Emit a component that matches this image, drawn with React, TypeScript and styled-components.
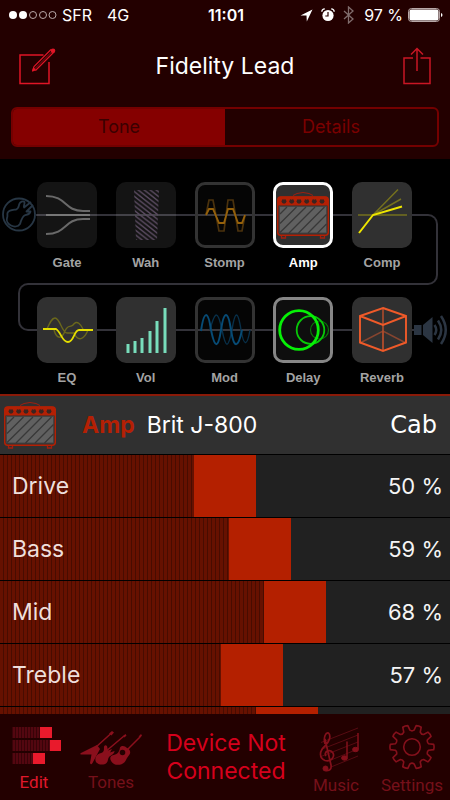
import React, { useState } from 'react';
import styled, { createGlobalStyle, css } from 'styled-components';

const GlobalStyle = createGlobalStyle`
  *, *::before, *::after { box-sizing: border-box; }
  body { margin: 0; background: #000; }
  button { border: 0; margin: 0; padding: 0; background: none; font: inherit; color: inherit; cursor: pointer; }
  svg { display: block; flex: none; }
`;

const Screen = styled.div`
  height: 100vh;
  display: flex;
  flex-direction: column;
  overflow: hidden;
  background: #000;
  color: #fff;
  font-family: Inter, 'Liberation Sans', sans-serif;
`;

const Header = styled.header`
  flex: none;
  padding-bottom: 12px;
  background: #230000;
`;

const StatusBar = styled.div`
  display: grid;
  grid-template-columns: 1fr auto 1fr;
  align-items: center;
  height: 30px;
  padding: 0 7px 0 9px;
  font-size: 16px;
  line-height: 20px;
  white-space: nowrap;
`;

const StatusGroup = styled.div<{ $end?: boolean }>`
  display: flex;
  align-items: center;
  gap: 5px;
  justify-content: ${p => (p.$end ? 'flex-end' : 'flex-start')};
`;

const StatusIcons = styled.span`
  display: flex;
  align-items: center;
  gap: 8px;
  margin-right: 5px;
`;

const Network = styled.span`
  margin-left: 10px;
`;

const Clock = styled.time`
  font-weight: 600;
`;

const TitleBar = styled.div`
  display: grid;
  grid-template-columns: 38px 1fr 38px;
  align-items: center;
  height: 77px;
  padding: 0 18px 5px;
`;

const ShareButton = styled.button`
  justify-self: end;
`;

const Title = styled.h1`
  margin: 0;
  text-align: center;
  font-size: 23px;
  line-height: 30px;
  font-weight: 400;
`;

const Segmented = styled.div`
  display: grid;
  grid-template-columns: 1fr 1fr;
  height: 40px;
  margin: 0 11px;
  border: 2px solid #740000;
  border-radius: 6px;
  overflow: hidden;
`;

const Segment = styled.button<{ $active?: boolean }>`
  && {
    font-size: 18px;
    line-height: 20px;
    ${p => (p.$active
      ? css`background: #850000; color: #3a0000;`
      : css`color: #7a0000;`)}
  }
`;

const Chain = styled.section`
  position: relative;
  z-index: 0;
  flex: none;
  display: flex;
  flex-direction: column;
  gap: 23px;
  height: 235px;
  padding-top: 23px;
`;

const WireRight = styled.div`
  position: absolute;
  z-index: -1;
  left: 36px;
  right: 12px;
  top: 55px;
  height: 71px;
  border: 2px solid #333239;
  border-left: 0;
  border-radius: 0 10px 10px 0;
`;

const WireLeft = styled.div`
  position: absolute;
  z-index: -1;
  left: 18px;
  right: 30px;
  top: 124px;
  height: 48px;
  border: 2px solid #333239;
  border-right: 0;
  border-radius: 10px 0 0 10px;
`;

const ChainRow = styled.div`
  display: grid;
  grid-template-columns: 37px 1fr 38px;
`;

const ChainEnd = styled.div<{ $out?: boolean }>`
  height: 66px;
  display: flex;
  align-items: center;
  justify-content: ${p => (p.$out ? 'flex-end' : 'center')};
`;

const Blocks = styled.div`
  display: flex;
  justify-content: space-between;
`;

const Block = styled.button`
  width: 60px;
  display: flex;
  flex-direction: column;
  align-items: center;
  gap: 4px;
`;

type TileKind = 'on' | 'off' | 'dark' | 'selected' | 'lit';

const tileLook: Record<TileKind, ReturnType<typeof css>> = {
  on: css`background: #303030;`,
  off: css`background: rgba(255, 255, 255, 0.08);`,
  dark: css`background: rgba(255, 255, 255, 0.02); border: 3px solid #333;`,
  selected: css`background: #303030; border: 3px solid #fff;`,
  lit: css`background: #0e0e0e; border: 3px solid #868686;`,
};

const Tile = styled.span<{ $kind: TileKind }>`
  width: 60px;
  height: 66px;
  display: flex;
  align-items: center;
  justify-content: center;
  border-radius: 10px;
  ${p => tileLook[p.$kind]}
  svg { margin: -3px; }
`;

const BlockLabel = styled.span<{ $kind: TileKind }>`
  font: bold 13px/22px 'Liberation Sans', Arial, sans-serif;
  color: ${p => (p.$kind === 'selected' ? '#fff' : '#a3a3a3')};
  white-space: nowrap;
`;

const ModelBar = styled.section`
  flex: none;
  display: flex;
  align-items: center;
  height: 60px;
  margin-bottom: 1px;
  padding: 0 13px 0 4px;
  border-top: 2px solid #8a1a08;
  background: #303030;
  font-size: 23px;
  line-height: 30px;
`;

const ModelButton = styled.button`
  display: flex;
  align-items: center;
  flex: 1;
`;

const ModelType = styled.strong`
  margin: 0 12px 0 26px;
  font-weight: 700;
  color: #b42004;
`;

const CabButton = styled.button`
  && { font-family: 'DejaVu Sans', Verdana, sans-serif; font-size: 24px; }
`;

const Params = styled.main`
  flex: 1;
  min-height: 0;
  overflow: hidden;
`;

const ParamRow = styled.label`
  display: grid;
  grid-template-columns: 1fr auto;
  align-items: center;
  height: 63px;
  border-bottom: 1px solid #000;
  font-size: 23px;
  line-height: 30px;
`;

const ParamText = styled.span<{ $value?: boolean }>`
  grid-row: 1;
  grid-column: ${p => (p.$value ? 2 : 1)};
  z-index: 1;
  padding: ${p => (p.$value ? '0 7px 0 0' : '0 0 0 12px')};
  font-size: ${p => (p.$value ? 22 : 23)}px;
  color: ${p => (p.$value ? '#f4f4f4' : '#eedfdc')};
  pointer-events: none;
`;

const knob = css`
  width: 62px;
  height: 62px;
  border: 0;
  border-radius: 0;
  background: #b42000;
`;

const Slider = styled.input`
  grid-row: 1;
  grid-column: 1 / 3;
  appearance: none;
  width: 100%;
  height: 62px;
  margin: 0;
  cursor: pointer;
  background:
    linear-gradient(to right, transparent calc((100% - 62px) * var(--level)), #212121 0),
    repeating-linear-gradient(to right, #661100 0 3px, #480c00 3px 4px);
  &::-webkit-slider-thumb { appearance: none; ${knob} }
  &::-moz-range-thumb { ${knob} }
`;

const TabBar = styled.nav`
  flex: none;
  display: grid;
  grid-template-columns: 68px 86px 1fr 76px 76px;
  height: 86px;
  background: #230000;
`;

const Tab = styled.button<{ $active?: boolean; $low?: boolean }>`
  display: flex;
  flex-direction: column;
  align-items: center;
  justify-content: flex-end;
  && {
    padding-bottom: ${p => (p.$low ? 6 : 9)}px;
    font: 17px/18px Roboto, 'Liberation Sans', sans-serif;
    color: ${p => (p.$active ? '#e0182b' : '#75101a')};
  }
`;

const DeviceStatus = styled.button`
  && {
    font-size: 23px;
    line-height: 28px;
    color: #d6001c;
    text-align: center;
  }
`;

const ComposeIcon = () => (
  <svg width="38" height="38" viewBox="0 0 38 38" fill="none" stroke="#e01526" strokeWidth="1.5">
    <path d="M25.500 8H2V36.500H31V15" />
    <path d="M14.500 24L16 19.500 33 2.500M17.500 23.500L36 5" strokeWidth="1.100" />
    <path d="M16.500 22L34 4.500" strokeWidth=".600" />
    <path d="M14 24.800l1.300-4.800 3 3.200z" fill="#e01526" stroke="none" />
    <circle cx="35" cy="3.700" r="2.300" fill="#e01526" stroke="none" />
  </svg>
);

const ShareIcon = () => (
  <svg width="30" height="40" viewBox="0 0 30 40" fill="none" stroke="#c91624" strokeWidth="1.500">
    <path d="M11 12H2V37.500H28V12H18.500" />
    <path d="M15 25V3M9 8.500l6-6 6 6" />
  </svg>
);

const SignalIcon = () => (
  <svg width="48" height="10" viewBox="0 0 48 10">
    <circle cx="4" cy="5" r="4" fill="#fff" />
    <circle cx="14" cy="5" r="4" fill="#fff" />
    {[24, 34, 43.5].map(x => <circle key={x} cx={x} cy="5" r="3.500" fill="none" stroke="#b8a8a8" />)}
  </svg>
);

const LocationIcon = () => (
  <svg width="13" height="13" viewBox="0 0 13 13"><path d="M.500 6.500L12.500.500 6.800 12.500 6.500 6.500z" fill="#fff" /></svg>
);

const AlarmIcon = () => (
  <svg width="14" height="14" viewBox="0 0 14 14">
    <circle cx="7" cy="7.500" r="5.600" fill="#fff" />
    <path d="M.800 3.800A3 3 0 013.800.900M10.200.900a3 3 0 013 2.900" stroke="#fff" strokeWidth="1.300" fill="none" />
    <path d="M7 4v4H4.300" stroke="#230000" strokeWidth="1.200" fill="none" />
  </svg>
);

const BluetoothIcon = () => (
  <svg width="11" height="18" viewBox="0 0 11 18"><path d="M1 5l9 8-4.500 4V1L10 5l-9 8" fill="none" stroke="#806c6c" strokeWidth="1.300" /></svg>
);

const BatteryIcon = () => (
  <svg width="35" height="14" viewBox="0 0 35 14">
    <rect x=".500" y=".500" width="31" height="13" rx="3" fill="none" stroke="#b8a8a8" />
    <rect x="1.500" y="1.500" width="29" height="11" rx="2" fill="#fff" />
    <path d="M33 5v4q1.500-.500 1.500-2T33 5z" fill="#fff" />
  </svg>
);

const InputIcon = () => (
  <svg width="35" height="36" viewBox="0 0 35 36" fill="none" stroke="#273644" strokeWidth="1.800" strokeLinejoin="round">
    <circle cx="18" cy="17.500" r="16" />
    <path d="M30 5L23 10.500C22 10 24 7 23.500 5C22 3.500 19 5 18.300 7C17.500 10 17.500 12 15 12.500C11 13 7.500 13 6.500 16C6 18 7 19 6 21C5 24 7 27 10 28.500C13 30 17 30 19 27C20 24 21 20 23.500 18.500C26 17.500 29 17.500 29.500 14.500L25.500 14.500 32 8" />
  </svg>
);

const OutputIcon = () => (
  <svg width="36" height="32" viewBox="0 0 36 32" fill="none" stroke="#2b3542" strokeWidth="2.500">
    <path d="M0 11h7.500v10H0zM9 11L18.500 3v26L9 21z" fill="#2b3542" stroke="none" />
    <path d="M20.500 11q3.500 5 0 10M24 6.500q6.500 9.500 0 19M27 2q9.500 14 0 28" />
  </svg>
);

const AmpIcon = () => (
  <svg width="52" height="48" viewBox="0 0 52 48">
    <path d="M16 4.500L20 2.500Q26 .500 32 2.500L36 4.500" fill="none" stroke="#9c2010" strokeWidth="1" />
    <rect x=".700" y="6" width="50.600" height="38.300" rx="3" fill="#303030" stroke="#b42004" strokeWidth="1.500" />
    <path d="M1 14.500V8q0-2.500 2.500-2.500h45Q51 5.500 51 8v6.500z" fill="#b42004" />
    {[7, 14.7, 22, 29.7, 37.3, 45].map(x => (
      <g key={x}>
        <circle cx={x} cy="10.300" r="2.400" fill="#3a2420" />
        <path d={`M${x} 7v2`} stroke="#b42004" strokeWidth=".800" />
      </g>
    ))}
    <rect x="2.500" y="15.500" width="47" height="26.500" fill="#606060" stroke="#444" />
    <path d="M3 23l7-7M3 32.500L19.500 16M3 41.500L29 16M12 42l26-26M21.500 42l26-26M31 42l18.500-18.500M40.500 42l9-9" stroke="#383838" strokeWidth="1.300" />
    <path d="M4.500 45v2h4v-2M43.500 45v2h4v-2" fill="none" stroke="#a02010" strokeWidth="1.300" />
  </svg>
);

const Pic = ({ children }: { children: React.ReactNode }) => (
  <svg width="60" height="66" viewBox="0 0 60 66" fill="none">{children}</svg>
);

const GateIcon = () => (
  <Pic>
    <g stroke="#696969" strokeWidth="2">
      <path d="M9 14C30 14 27 29 46 29H53M9 52C30 52 27 37 46 37H53" />
      <path d="M9 33H53" stroke="#777" />
    </g>
  </Pic>
);

const WahIcon = () => (
  <Pic>
    <defs>
      <pattern id="wah-lines" width="6" height="4.700" patternUnits="userSpaceOnUse">
        <path d="M-1 -.800L7 5.500M-1 3.900L7 10.200M-1 -5.500L7 .800" stroke="#594a5f" strokeWidth="1.400" />
      </pattern>
    </defs>
    <path d="M18 8H43L41 58H20z" fill="url(#wah-lines)" />
  </Pic>
);

const StompIcon = () => (
  <Pic>
    <path d="M11 33L14 18H18L24 49H29L33 18H38L43 49H47L50 33" stroke="#4b320d" strokeWidth="1.700" />
    <path d="M11 33L14 27H18L24 41H29L33 27H38L43 41H47L50 33" stroke="#95610b" strokeWidth="1.800" />
  </Pic>
);

const CompIcon = () => (
  <Pic>
    <path d="M6 33H55M21 33L46 7.500M21 33L49 17" stroke="#74701e" strokeWidth="1.500" />
    <path d="M7 51L21 33 50 24.500" stroke="#eee600" strokeWidth="2" />
  </Pic>
);

const EqIcon = () => (
  <Pic>
    <path d="M6 32H10C13 25 15 21 18 21C23 21 25 36 30 36H37C41 45 47 43 51 33M17 33C20 43 25 42 28 34C31 27 33 31 36 28C40 22 44 28 46 32" stroke="#6b681b" strokeWidth="1.400" />
    <path d="M6 32H19C24 35 25 45 31 45C37 45 37 33 42 33H56" stroke="#e5df00" strokeWidth="1.800" />
  </Pic>
);

const VolIcon = () => (
  <Pic>
    <path d="M12 56v-9M19 56v-12M26 56v-15M34 56V34M41 56V24M49 56V11" stroke="#78ddbb" strokeWidth="3" />
  </Pic>
);

const ModIcon = () => (
  <Pic>
    <path d="M15 33C20 13 23 13 27 33C31 52 33 52 37 33C40 13 43 13 46 33C49 50 52 50 55 33" stroke="#08304a" strokeWidth="1.400" />
    <path d="M6 34C9 13 13 13 16 33C20 52 23 52 26 33C29 13 33 13 36 33C39 52 43 52 47 33" stroke="#074b75" strokeWidth="2" />
  </Pic>
);

const DelayIcon = () => (
  <Pic>
    <circle cx="46.500" cy="33" r="9" stroke="#087a08" strokeWidth="1.200" />
    <circle cx="37.500" cy="33" r="13.800" stroke="#08c808" strokeWidth="1.800" />
    <circle cx="26" cy="33" r="19.300" stroke="#06f006" strokeWidth="2.800" />
  </Pic>
);

const ReverbIcon = () => (
  <Pic>
    <path d="M8 46L31 34 54 46M31 34V54" stroke="#87452f" strokeWidth="1.500" />
    <path d="M31 11V54" stroke="#b64d2b" strokeWidth="1.500" />
    <path d="M31 11L54 19V45.500L31 54 8 45.500V19zM8 19L31 28 54 19" stroke="#ef5a29" strokeWidth="1.900" />
  </Pic>
);

const EditIcon = () => (
  <svg width="54" height="52" viewBox="0 0 54 52">
    <defs>
      <pattern id="edit-lines" width="3" height="4" patternUnits="userSpaceOnUse">
        <path d="M0 0h2v4H0z" fill="#530710" /><path d="M2 0h1v4H2z" fill="#380308" />
      </pattern>
    </defs>
    <path d="M5 6h28v11H5zM5 19h39v11H5zM5 32h22v11H5z" fill="url(#edit-lines)" />
    <path d="M33 6h12v11H33zM43 19h11v11H43zM26 32h12v11H26z" fill="#e91a2c" />
  </svg>
);

const GuitarsIcon = () => (
  <svg width="62" height="52" viewBox="2 0 62 52" fill="#8a0f1c">
    <path d="M18 26L33 12.500M27 31L46 15M48 30L62 16" stroke="#8a0f1c" strokeWidth="1.500" />
    <path d="M31 12.500L34 10 36 11.500 33.500 14.500zM45 15L47.500 13 48.500 14.500 46.500 16.500zM60.500 15.500L63 13 64 14.500 62.500 16.500z" />
    <path d="M19 24L3 32Q1.500 33 3 33.500L13.500 33.500 12 42Q13 44.500 14.500 42L22 28z" />
    <path d="M29 25C27 23 25.500 25 26 28C26 31 24 32 21.500 32.500C17.500 34 16.500 38 18 41C20 44 26 44.500 28.500 42C30.500 40 29.500 38 31 36C33 34 36.500 33 36.500 30L32 31.500 34 28 30 29.500z" />
    <path d="M42 26.500C44 24 47 25 49 27C52 28.500 53 31 51.500 33.500C50 35.500 49 37 48 39C46 43.500 40 45 36 43C32 40.500 31 36 34 34.500C39 33.500 41 32 42 26.500zM44.500 28.700a2.800 2.800 0 100 5.600 2.800 2.800 0 000-5.600z" fillRule="evenodd" />
  </svg>
);

const MusicIcon = () => (
  <svg width="46" height="52" viewBox="0 0 46 52" fill="none" stroke="#84101b">
    <path d="M8 18.500L45 4M8 25.500L45 11M8 32.500L45 18M18 36L45 25M18 43L45 32" stroke="#570b12" />
    <path d="M12 20C10 13 13 8 15.500 9C18.500 12 16 18 12 22C6 27 6 34 12 36.500C18 38 22 33 20 29C17 24 10 28 13 32M12 15L18 41Q19 47 13 46.500" strokeWidth="1.700" />
    <path d="M34 17.500V33M45 9V25" strokeWidth="1.500" />
    <ellipse cx="31.500" cy="34" rx="2.900" ry="2.200" fill="#84101b" />
    <ellipse cx="42.500" cy="25.500" rx="2.900" ry="2.200" fill="#84101b" />
    <circle cx="12.500" cy="44.500" r="2.500" fill="#84101b" />
  </svg>
);

const gearPath = Array.from({ length: 10 }, (_, i) => {
  const at = (r: number, deg: number) => {
    const a = ((i * 36 + deg) * Math.PI) / 180;
    return `${(23 + r * Math.cos(a)).toFixed(2)} ${(23 + r * Math.sin(a)).toFixed(2)}`;
  };
  return `${i ? 'L' : 'M'}${at(17, -11)}L${at(21.8, -7)}Q${at(22.5, 0)} ${at(21.8, 7)}L${at(17, 11)}Q${at(15.5, 18)} ${at(17, 25)}`;
}).join('') + 'Z';

const GearIcon = () => (
  <svg width="46" height="52" viewBox="0 0 46 52" fill="none" stroke="#84101b" strokeWidth="1.600" strokeLinejoin="round">
    <path d={gearPath} />
    <circle cx="23" cy="23" r="8.300" />
  </svg>
);

interface Effect { name: string; kind: TileKind; icon: React.ReactNode }

const firstRow: Effect[] = [
  { name: 'Gate', kind: 'off', icon: <GateIcon /> },
  { name: 'Wah', kind: 'off', icon: <WahIcon /> },
  { name: 'Stomp', kind: 'dark', icon: <StompIcon /> },
  { name: 'Amp', kind: 'selected', icon: <AmpIcon /> },
  { name: 'Comp', kind: 'on', icon: <CompIcon /> },
];

const secondRow: Effect[] = [
  { name: 'EQ', kind: 'on', icon: <EqIcon /> },
  { name: 'Vol', kind: 'on', icon: <VolIcon /> },
  { name: 'Mod', kind: 'dark', icon: <ModIcon /> },
  { name: 'Delay', kind: 'lit', icon: <DelayIcon /> },
  { name: 'Reverb', kind: 'on', icon: <ReverbIcon /> },
];

const EffectBlocks = ({ effects }: { effects: Effect[] }) => (
  <Blocks>
    {effects.map(e => (
      <Block key={e.name} type="button">
        <Tile $kind={e.kind}>{e.icon}</Tile>
        <BlockLabel $kind={e.kind}>{e.name}</BlockLabel>
      </Block>
    ))}
  </Blocks>
);

const Param = ({ name, initial }: { name: string; initial: number }) => {
  const [value, setValue] = useState(initial);
  return (
    <ParamRow>
      <Slider
        type="range"
        min={0}
        max={100}
        value={value}
        onChange={e => setValue(Number(e.target.value))}
        style={{ '--level': value / 100 } as React.CSSProperties}
      />
      <ParamText>{name}</ParamText>
      <ParamText $value>{value} %</ParamText>
    </ParamRow>
  );
};

const UnnamedParam = ({ initial }: { initial: number }) => {
  const [value, setValue] = useState(initial);
  return (
    <ParamRow>
      <Slider
        type="range"
        aria-label="Level"
        value={value}
        onChange={e => setValue(Number(e.target.value))}
        style={{ '--level': value / 100 } as React.CSSProperties}
      />
    </ParamRow>
  );
};

export default function App() {
  return (
    <Screen>
      <GlobalStyle />
      <Header>
        <StatusBar>
          <StatusGroup>
            <SignalIcon />
            <span>SFR</span>
            <Network>4G</Network>
          </StatusGroup>
          <Clock>11:01</Clock>
          <StatusGroup $end>
            <StatusIcons>
              <LocationIcon />
              <AlarmIcon />
              <BluetoothIcon />
            </StatusIcons>
            <span>97 %</span>
            <BatteryIcon />
          </StatusGroup>
        </StatusBar>
        <TitleBar>
          <button type="button" aria-label="Edit tone"><ComposeIcon /></button>
          <Title>Fidelity Lead</Title>
          <ShareButton type="button" aria-label="Share"><ShareIcon /></ShareButton>
        </TitleBar>
        <Segmented>
          <Segment type="button" $active>Tone</Segment>
          <Segment type="button">Details</Segment>
        </Segmented>
      </Header>

      <Chain>
        <WireRight />
        <WireLeft />
        <ChainRow>
          <ChainEnd><InputIcon /></ChainEnd>
          <EffectBlocks effects={firstRow} />
        </ChainRow>
        <ChainRow>
          <ChainEnd />
          <EffectBlocks effects={secondRow} />
          <ChainEnd $out><OutputIcon /></ChainEnd>
        </ChainRow>
      </Chain>

      <ModelBar>
        <ModelButton type="button">
          <AmpIcon />
          <ModelType>Amp</ModelType>
          <span>Brit J-800</span>
        </ModelButton>
        <CabButton type="button">Cab</CabButton>
      </ModelBar>

      <Params>
        <Param name="Drive" initial={50} />
        <Param name="Bass" initial={59} />
        <Param name="Mid" initial={68} />
        <Param name="Treble" initial={57} />
        <UnnamedParam initial={66} />
      </Params>

      <TabBar>
        <Tab type="button" $active><EditIcon />Edit</Tab>
        <Tab type="button"><GuitarsIcon />Tones</Tab>
        <DeviceStatus type="button">Device Not<br />Connected</DeviceStatus>
        <Tab type="button" $low><MusicIcon />Music</Tab>
        <Tab type="button" $low><GearIcon />Settings</Tab>
      </TabBar>
    </Screen>
  );
}
